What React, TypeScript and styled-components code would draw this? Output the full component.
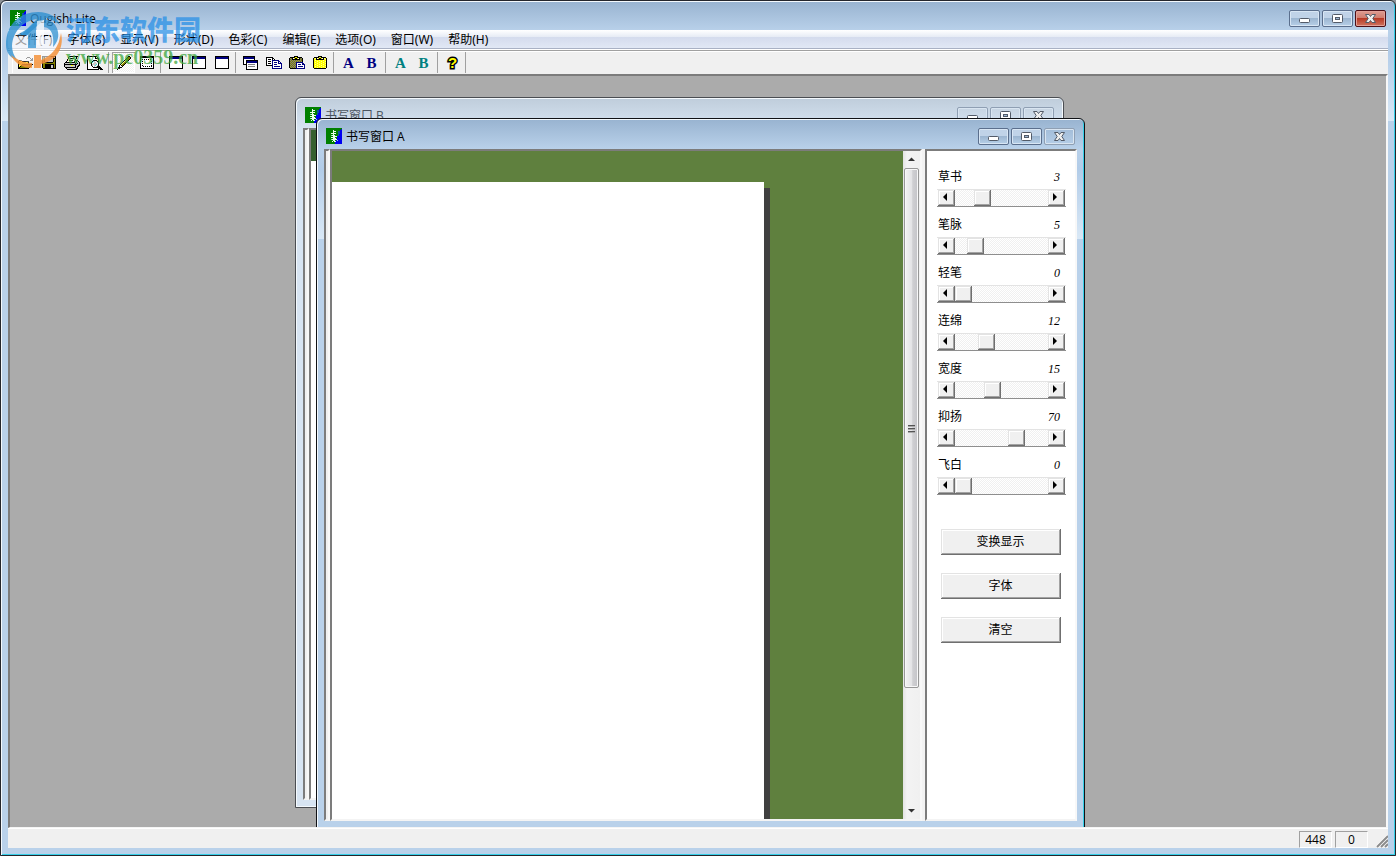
import React from 'react';
import styled, { createGlobalStyle, css } from 'styled-components';

const GlobalStyle = createGlobalStyle`
  * { box-sizing: border-box; }
  body {
    margin: 0;
    background: #8d9297;
    font-family: 'Open Sans', 'Noto Sans CJK SC', sans-serif;
    font-size: 12px;
    line-height: 18px;
    color: #000;
  }
  button, input { font: inherit; color: inherit; margin: 0; }
`;

const sunken = css`
  border: 2px solid;
  border-color: #7c7c7c #f8f8f8 #f4f4f4 #7c7c7c;
`;

const raised = css`
  border: 0;
  background: #f0f0f0;
  box-shadow: inset -1px -1px #6f6f6f, inset 1px 1px #e3e3e3, inset -2px -2px #a3a3a3, inset 2px 2px #fff;
`;

/* ---------- window frames ---------- */

const glass = css`
  background: linear-gradient(#98b3d0 0, #b9d1ea 30px, #b2cce8 50px, #d9e8f6 120px, #b9d1ea 120px);
  box-shadow: inset 1px 1px #f4f9fd, inset -1px -1px #35cfe8;
`;

const paleGlass = css`
  background: linear-gradient(#bfcddb 0, #d7e4f2 30px);
  box-shadow: inset 1px 1px #f4f9fd, inset -1px -1px #f4f9fd;
`;

const AppFrame = styled.div`
  ${glass}
  position: relative;
  display: flex;
  flex-direction: column;
  min-height: 100vh;
  padding: 0 7px 7px;
  border: 1px solid #24262c;
  border-radius: 6px 6px 0 0;
`;

const ChildFrame = styled.section<{ $left: number; $top: number; $height: number; $active?: boolean }>`
  ${p => (p.$active ? glass : paleGlass)}
  position: absolute;
  left: ${p => p.$left}px;
  top: ${p => p.$top}px;
  width: 769px;
  height: ${p => p.$height}px;
  display: flex;
  flex-direction: column;
  padding: 0 7px 7px;
  border: 1px solid ${p => (p.$active ? '#101216' : '#4a4d52')};
  border-radius: 6px 6px 0 0;
`;

const CaptionBar = styled.header<{ $tall?: boolean }>`
  flex: none;
  display: flex;
  align-items: flex-start;
  gap: 4px;
  height: ${p => (p.$tall ? 30 : 29)}px;
  padding: 9px 2px 0;
`;

const CaptionText = styled.h1<{ $dim?: boolean }>`
  flex: 1;
  margin: 0;
  font-size: 12px;
  line-height: 17px;
  font-weight: 400;
  color: ${p => (p.$dim ? '#4b5560' : '#000')};
`;

const CaptionButtons = styled.div`
  display: flex;
  gap: 2px;
`;

const CaptionButton = styled.button<{ $kind: 'normal' | 'close' | 'dim' }>`
  display: grid;
  place-items: center;
  width: 31px;
  height: 17px;
  padding: 0;
  border: 1px solid ${p => ({ normal: '#5b6f8d', close: '#4c0f17', dim: '#8f9fb3' })[p.$kind]};
  border-radius: 2px;
  box-shadow: inset 0 0 0 1px ${p => ({ normal: '#d8e6f4', close: '#e3a097', dim: '#d9e5f1' })[p.$kind]};
  background: ${p =>
    ({
      normal: 'linear-gradient(#c0d3e8 0 50%, #9cb6d1 50%, #b7d0e8)',
      close: 'linear-gradient(#dd9c92 0, #cf7a6c 50%, #b83a26 50%, #cf7460)',
      dim: 'transparent',
    })[p.$kind]};
`;

type GlyphKind = 'min' | 'max' | 'close';

function CaptionGlyph({ kind }: { kind: GlyphKind }) {
  if (kind === 'min')
    return (
      <svg width="13" height="11" viewBox="0 0 13 11">
        <rect x="1.5" y="5.5" width="10" height="4" rx="1" fill="#fff" stroke="#535b68" />
      </svg>
    );
  if (kind === 'max')
    return (
      <svg width="13" height="11" viewBox="0 0 13 11">
        <rect x="1.5" y="1.5" width="10" height="8" rx="1" fill="#fff" stroke="#535b68" />
        <rect x="4.5" y="4.5" width="4" height="2" fill="#9db6d3" stroke="#535b68" />
      </svg>
    );
  return (
    <svg width="13" height="11" viewBox="0 0 13 11">
      <path
        d="M1.5 1.500h3.500l1.500 2 1.500-2h3.500L8.800 5.500l2.700 4H8l-1.500-2-1.500 2H1.500l2.700-4z"
        fill="#eee"
        stroke="#535b68"
        strokeLinejoin="round"
      />
    </svg>
  );
}

function AppIcon() {
  return (
    <svg width="16" height="16" viewBox="0 0 16 16" shapeRendering="crispEdges" aria-hidden="true">
      <path d="M0 0h16v16H0z" fill="#008000" />
      <path d="M16 1v15H9v-3l2-2V8l2-1V4l2-3z" fill="#0000f0" />
      <path d="M12 3h2v3h-1v2h-1z" fill="#0b54a0" />
      <path
        d="M7 2h1v1h2v1H8v1h2v1H8v1h1v1h2v1H9v1h1v1h1v1H9v1h1v1H8v-1H7v1H6v-1h1v-1H6v-1h1v-1H5V9h2V8H6V7h1V6H5V5h2z"
        fill="#eaffef"
      />
      <path d="M5 7h1v1H5zM11 12h1v1h-1zM5 11h1v1H5z" fill="#9fe0c0" />
    </svg>
  );
}

function Caption({ title, close, dim, tall }: { title: string; close: 'close' | 'dim'; dim?: boolean; tall?: boolean }) {
  const kind = dim ? 'dim' : 'normal';
  return (
    <CaptionBar $tall={tall}>
      <AppIcon />
      <CaptionText $dim={dim}>{title}</CaptionText>
      <CaptionButtons>
        <CaptionButton $kind={kind} aria-label="最小化"><CaptionGlyph kind="min" /></CaptionButton>
        <CaptionButton $kind={kind} aria-label="最大化"><CaptionGlyph kind="max" /></CaptionButton>
        <CaptionButton $kind={close} aria-label="关闭"><CaptionGlyph kind="close" /></CaptionButton>
      </CaptionButtons>
    </CaptionBar>
  );
}

/* ---------- menu and toolbar ---------- */

const MenuBar = styled.nav`
  flex: none;
  display: flex;
  gap: 1px;
  height: 20px;
  background: linear-gradient(#fff 0, #e6ebf5 7px, #d4dbed 7px, #e1e8f5 18px, #a9b1c4 18px, #a9b1c4 19px, #fff 19px);
`;

const MenuItem = styled.button`
  padding: 0 7px;
  border: 0;
  background: none;
  font-family: 'Noto Sans', 'Noto Sans CJK SC', sans-serif;
  line-height: 20px;
  white-space: nowrap;
`;

const ToolBar = styled.div`
  flex: none;
  display: flex;
  align-items: center;
  height: 24px;
  padding-left: 4px;
  border-top: 1px solid #a0a0a0;
  box-shadow: inset 0 1px #fff;
  background: #f0f0f0;
`;

const ToolGroup = styled.div`
  display: flex;
  border-right: 1px solid #a0a0a0;
  padding-right: 2px;
  margin-right: 3px;
  &:first-child { border-left: 1px solid #fff; padding-left: 1px; }
  &:last-child { padding-right: 1px; }
`;

const ToolButton = styled.button<{ $pressed?: boolean }>`
  display: grid;
  place-items: center;
  width: 23px;
  height: 21px;
  padding: 0;
  border: 0;
  background: ${p => (p.$pressed ? 'repeating-conic-gradient(#fff 0 25%, #f0f0f0 0 50%) 0 0 / 2px 2px' : 'none')};
  box-shadow: ${p => (p.$pressed ? 'inset 1px 1px #a0a0a0, inset -1px -1px #fff' : 'none')};
`;

const LetterIcon = styled.span<{ $color: string }>`
  font: bold 15px/18px 'Liberation Serif', serif;
  color: ${p => p.$color};
`;

const HelpIcon = styled.span`
  font: bold 15px/18px 'Liberation Sans', sans-serif;
  color: #ffff00;
  -webkit-text-stroke: 3px #000;
  paint-order: stroke fill;
`;

const palette: Record<string, string> = {
  K: '#000', W: '#fff', Y: '#ffff00', P: '#ffff90', O: '#808000', G: '#808080', L: '#c8c8c8', N: '#000080', C: '#40e0e0',
};

const bitmaps: Record<string, string[]> = {
  open: [
    '.........KKK....', '........K...K.K.', '.............KK.', '.KKK........KKK.', 'KPYPKKKKKKK.....', 'KYPYPYPYPYK.....',
    'KPYPYPYPYPK.....', 'KYPYKKKKKKKKKKK.', 'KPYKOOOOOOOOOK..', 'KYKOOOOOOOOOK...', 'KKOOOOOOOOOK....', 'KKKKKKKKKKK.....',
  ],
  save: [
    'KKKKKKKKKKKKKK', 'KOKLLLLLLLLKLK', 'KOKLLLLLLLLKKK', 'KOKLLLLLLLLKOK', 'KOKLLLLLLLLKOK', 'KOKLLLLLLLLKOK', 'KOOKKKKKKKKOOK',
    'KOOOOOOOOOOOOK', 'KOOKKKKKKKKKOK', 'KOOKKKKKKLLKOK', 'KOOKKKKKKLLKOK', 'KOOKKKKKKLLKOK', '.KKKKKKKKKKKKK',
  ],
  print: [
    '.....KKKKKKKKK..', '....KWWWWWWWK...', '....KWKKKKWWK...', '...KWWWWWWWK....', '...KWKKKKWWKKK..', '..KWWWWWWWKLKLK.',
    '.KKKKKKKKKKLKLLK', 'KLLLLLLLLLLKLKLK', 'KKKKKKKKKKKKKLLK', 'KLLLLLLYYLLKLLKK', 'KLLLLLLLLLLKLKK.', '.KKKKKKKKKKKLK..', '..KLLLLLLLLLKK..',
    '...KKKKKKKKKK...',
  ],
  preview: [
    'KKKKKKKKKK......', 'KWWWWWWWKWK.....', 'KWWWWWWWKKKK....', 'KWWWWWWWWWWK....', 'KWWWWWKKKKWK....', 'KWWWWKCLWLKK....',
    'KWWWKCWLLWLK....', 'KWWWKWLLLLWK....', 'KWWWKLLLLCWK....', 'KWWWKLWLCWLK....', 'KWWWWKWLWLKKK...', 'KWWWWWKKKKKKKK..',
    'KWWWWWWWWWWKKKK.', 'KKKKKKKKKKKK.KKK',
  ],
  pen: [
    '............KK..', '...........KOOK.', '..........KOOOK.', '.........KOOOK..', '........KPOOK...', '.......KPOOK....', '......KPOOK.....',
    '.....KPOOK......', '....KPOOK.......', '...KWKOK........', '...KWWK.........', '..KKKK..........', '..KK............', '.K..............',
  ],
  select: [
    'KKKKKKKKKKKKKK', 'KKKKKKKKKKKKKK', 'KWWWWWWWWWWWWK', 'KWKWKWKWKWKWWK', 'KWWWWWWWWWWWWK', 'KWKWWWWWWWWKWK', 'KWWWWWWWWWWWWK',
    'KWKWWWWWWWWKWK', 'KWWWWWWWWWWWWK', 'KWKWWWWWWWWKWK', 'KWWKWKWKWKWKWK', 'KWWWWWWWWWWWWK', 'KKKKKKKKKKKKKK',
  ],
  window: [
    'KKKKKKKKKKKKKK', 'KNNNNNNNNNNNNK', 'KNNNNNNNNNNNNK', 'KWWWWWWWWWWWWK', 'KWWWWWWWWWWWWK', 'KWWWWWWWWWWWWK', 'KWWWWWWWWWWWWK',
    'KWWWWWWWWWWWWK', 'KWWWWWWWWWWWWK', 'KWWWWWWWWWWWWK', 'KWWWWWWWWWWWWK', 'KWWWWWWWWWWWWK', 'KKKKKKKKKKKKKK',
  ],
  cascade: [
    'KKKKKKKKKKKK...', 'KNNNNNNNNNNK...', 'KNNNNNNNNNNK...', 'KWWWWWWWWWWK...', 'KWWKKKKKKKKKKKK', 'KWWKNNNNNNNNNNK', 'KWWKNNNNNNNNNNK',
    'KWWKWWWWWWWWWWK', 'KKKKWGGGGGGGWWK', '...KWWWWWWWWWWK', '...KWGGGGGGGWWK', '...KWWWWWWWWWWK', '...KWWWWWWWWWWK', '...KKKKKKKKKKKK',
  ],
  copy: [
    'KKKKKKK.........', 'KWWWWWKK........', 'KWKKKWKWK.......', 'KWWWWWNNNNNNN...', 'KWKKKWNWWWWWNN..', 'KWWWWWNWNNNWNWN.', 'KWKKKWNWWWWWNNNN',
    'KWWWWWNWNNNWWWWN', 'KKKKKKNWWWWWWWWN', '......NWNNNNNNWN', '......NWWWWWWWWN', '......NNNNNNNNNN',
  ],
  paste: [
    '.....KKKK.......', '.KKKKKYYKKKKK...', 'KGOKWYKKYWKOGK..', 'KOGKKKKKKKKGOK..', 'KGOGOGOGOGOGOK..', 'KOGOGOGOGOGOGK..', 'KGOGOGONNNNNNN..',
    'KOGOGOGNWWWWWNN.', 'KGOGOGONWNNNWNNN', 'KOGOGOGNWWWWWWWN', 'KGOGOGONWNNNNNWN', 'KOGOGOGNWWWWWWWN', '.KKKKKKNNNNNNNNN',
  ],
  clipboard: [
    '.....KKKK.....', '.KKKKKYYKKKKK.', 'KYPKWYKKYWKPYK', 'KYYKKKKKKKKYPK', 'KYPYYYPYYYPYYK', 'KYYYPYYYPYYYPK', 'KYPYYYPYYYPYYK',
    'KYYYPYYYPYYYPK', 'KYPYYYPYYYPYYK', 'KYYYPYYYPYYYPK', 'KYPYYYPYYYPYYK', 'KYYYPYYYPYYYPK', '.KKKKKKKKKKKK.',
  ],
};

function Bitmap({ name }: { name: string }) {
  const rows = bitmaps[name];
  const width = rows[0].length;
  return (
    <svg width={width} height={rows.length} viewBox={`0 0 ${width} ${rows.length}`} shapeRendering="crispEdges" aria-hidden="true">
      {rows.flatMap((row, y) =>
        [...row].map((c, x) => (c === '.' ? null : <rect key={`${x}-${y}`} x={x} y={y} width="1" height="1" fill={palette[c]} />)),
      )}
    </svg>
  );
}

/* ---------- workspace ---------- */

const Workspace = styled.main`
  ${sunken}
  border-bottom-width: 1px;
  position: relative;
  flex: 1;
  min-height: 400px;
  overflow: hidden;
  background: #ababab;
`;

const Client = styled.div`
  flex: 1;
  min-height: 0;
  display: flex;
  background: #f3f3f3;
`;

const Ruler = styled.div`
  ${sunken}
  width: 6px;
  background: #f0f0f0;
`;

const CanvasPane = styled.div`
  ${sunken}
  flex: 1;
  display: flex;
  margin-right: 3px;
  overflow: hidden;
`;

const Canvas = styled.div<{ $ink: string }>`
  flex: 1;
  display: flex;
  padding-top: 31px;
  overflow: hidden;
  background: ${p => p.$ink};
`;

const Paper = styled.div`
  width: 432px;
  background: #fff;
  box-shadow: 6px 6px #404040;
`;

const ScrollColumn = styled.div`
  display: flex;
  flex-direction: column;
  width: 17px;
  padding: 0 1px;
  background: linear-gradient(90deg, #e3e3e3, #f3f3f3 4px, #f0f0f0);
`;

const ScrollArrow = styled.button`
  display: grid;
  place-items: center;
  height: 17px;
  padding: 0;
  border: 0;
  background: none;
  &:last-child { margin-top: auto; }
`;

const ScrollThumb = styled.div`
  display: grid;
  place-items: center;
  height: 520px;
  border: 1px solid #979797;
  border-radius: 2px;
  box-shadow: inset 0 0 0 1px #f8f8f8;
  background: linear-gradient(90deg, #f3f3f3, #e4e4e6 50%, #cfcfd2 60%, #c4c4c8);
`;

const Panel = styled.aside`
  ${sunken}
  width: 152px;
  padding: 17px 9px 0 10px;
  background: #fff;
`;

const Setting = styled.div`
  margin-bottom: 9px;
`;

const SettingHead = styled.div`
  display: flex;
  justify-content: space-between;
  margin-bottom: 3px;
  padding: 0 6px 0 1px;
`;

const SettingValue = styled.output`
  font: italic 12px/18px 'Liberation Serif', serif;
`;

const SliderRow = styled.div`
  display: flex;
  height: 18px;
  padding: 0 1px;
  border-top: 1px solid #e3e3e3;
  border-bottom: 1px solid #8e8e8e;
`;

const StepButton = styled.button`
  ${raised}
  display: grid;
  place-items: center;
  flex: none;
  width: 17px;
  padding: 0 2px 1px 0;
`;

const Range = styled.input`
  flex: 1;
  min-width: 0;
  height: 16px;
  appearance: none;
  background: repeating-conic-gradient(#fff 0 25%, #f0f0f0 0 50%) 0 0 / 2px 2px;
  &::-webkit-slider-thumb {
    ${raised}
    appearance: none;
    width: 17px;
    height: 16px;
    border-radius: 0;
  }
`;

const Actions = styled.div`
  display: flex;
  flex-direction: column;
  align-items: center;
  gap: 18px;
  padding: 25px 2px 0 0;
`;

const ActionButton = styled.button`
  ${raised}
  width: 120px;
  height: 26px;
  padding: 0;
`;

const StatusBar = styled.footer`
  flex: none;
  display: flex;
  align-items: flex-end;
  justify-content: flex-end;
  gap: 3px;
  height: 20px;
  border-top: 1px solid #fff;
  background: #f0f0f0;
`;

const StatusCell = styled.span`
  width: 33px;
  height: 17px;
  border: 1px solid;
  border-color: #a0a0a0 #fff #fff #a0a0a0;
  line-height: 16px;
  text-align: center;
`;

const SizeGrip = styled.svg`
  margin-left: 5px;
`;

const Triangle = ({ dir }: { dir: 'left' | 'right' | 'up' | 'down' }) => {
  const shapes = {
    left: 'M6 0v8L2 4z',
    right: 'M2 0v8l4-4z',
    up: 'M1 6h7L4.500 2.500z',
    down: 'M1 3h7L4.500 6.500z',
  };
  return (
    <svg width="9" height="9" viewBox="0 0 9 9" aria-hidden="true">
      <path d={shapes[dir]} fill={dir === 'up' || dir === 'down' ? '#333' : '#000'} />
    </svg>
  );
};

/* ---------- site mark over the corner ---------- */

const SiteMark = styled.div`
  position: absolute;
  left: 4px;
  top: 8px;
  display: flex;
  pointer-events: none;
`;

const SiteText = styled.div`
  padding: 5px 0 0 1px;
  white-space: nowrap;
`;

const SiteName = styled.div`
  font: 900 27px/30px 'Noto Sans CJK SC', sans-serif;
  color: rgba(36, 142, 230, 0.72);
`;

const SiteUrl = styled.div`
  font: bold 20px/26px 'Liberation Serif', serif;
  color: rgba(62, 166, 62, 0.75);
`;

function SiteLogo() {
  return (
    <svg width="60" height="62" viewBox="0 0 60 62" aria-hidden="true">
      <path d="M3 28h51v9c-4 9-12 15-24 16l-14-1C8 49 4 42 3 34z" fill="#fff" opacity="0.6" />
      <path d="M1 36C1 14 16 3 33 3c11 0 19 5 22 13-5-4-9-6-14-7L22 26h-6L32 10C18 12 8 22 7 37c0 5 2 10 5 14C5 49 1 43 1 36z" fill="#2f90d0" opacity="0.8" />
      <path d="M24 19l7-7v27h-8V26H12zM39 10c8 1 13 6 14 13 1 6-1 11-5 15 1-9 0-19-9-20z" fill="#2f90d0" opacity="0.75" />
      <path d="M32 12l7-1v25h-7z" fill="#fff" opacity="0.65" />
      <path d="M56 24c4 17-7 29-20 31v4h-7V46h7v5c10-4 18-12 20-27zM6 46c6 5 14 8 21 8v5C18 59 10 55 6 46z" fill="#f5933c" opacity="0.85" />
    </svg>
  );
}

const menus = ['文件(F)', '字体(S)', '显示(V)', '形状(D)', '色彩(C)', '编辑(E)', '选项(O)', '窗口(W)', '帮助(H)'];

const toolGroups: string[][] = [
  ['open', 'save', 'print', 'preview'],
  ['pen', 'select'],
  ['window', 'window', 'window'],
  ['cascade', 'copy', 'paste', 'clipboard'],
  ['A:#000080', 'B:#000080'],
  ['A:#008080', 'B:#008080'],
  ['?'],
];

const settings = [
  { label: '草书', value: 3, max: 12 },
  { label: '笔脉', value: 5, max: 32 },
  { label: '轻笔', value: 0, max: 10 },
  { label: '连绵', value: 12, max: 40 },
  { label: '宽度', value: 15, max: 40 },
  { label: '抑扬', value: 70, max: 100 },
  { label: '飞白', value: 0, max: 10 },
];

function ToolIcon({ name }: { name: string }) {
  if (name === '?') return <HelpIcon>?</HelpIcon>;
  if (name.includes(':')) {
    const [letter, color] = name.split(':');
    return <LetterIcon $color={color}>{letter}</LetterIcon>;
  }
  return <Bitmap name={name} />;
}

function SettingControl({ label, value: initial, max }: { label: string; value: number; max: number }) {
  const [value, setValue] = React.useState(initial);
  const id = React.useId();
  const step = (by: number) => setValue(v => Math.min(max, Math.max(0, v + by)));
  return (
    <Setting>
      <SettingHead>
        <label htmlFor={id}>{label}</label>
        <SettingValue htmlFor={id}>{value}</SettingValue>
      </SettingHead>
      <SliderRow>
        <StepButton aria-label={`${label} -`} onClick={() => step(-1)}><Triangle dir="left" /></StepButton>
        <Range id={id} type="range" min={0} max={max} value={value} onChange={e => setValue(Number(e.target.value))} />
        <StepButton aria-label={`${label} +`} onClick={() => step(1)}><Triangle dir="right" /></StepButton>
      </SliderRow>
    </Setting>
  );
}

export default function App() {
  return (
    <>
      <GlobalStyle />
      <AppFrame>
        <Caption title="Ougishi Lite" close="close" />
        <MenuBar>
          {menus.map(m => <MenuItem key={m}>{m}</MenuItem>)}
        </MenuBar>
        <ToolBar role="toolbar">
          {toolGroups.map((group, g) => (
            <ToolGroup key={g}>
              {group.map((name, i) => (
                <ToolButton key={i} $pressed={name === 'pen'} aria-label={name}><ToolIcon name={name} /></ToolButton>
              ))}
            </ToolGroup>
          ))}
        </ToolBar>
        <Workspace>
          <ChildFrame $left={285} $top={21} $height={711}>
            <Caption title="书写窗口 B" close="dim" dim tall />
            <Client>
              <Ruler />
              <CanvasPane><Canvas $ink="#35602f"><Paper /></Canvas></CanvasPane>
            </Client>
          </ChildFrame>
          <ChildFrame $left={306} $top={42} $height={711} $active>
            <Caption title="书写窗口 A" close="dim" tall />
            <Client>
              <Ruler />
              <CanvasPane>
                <Canvas $ink="#5f803e"><Paper /></Canvas>
                <ScrollColumn>
                  <ScrollArrow aria-label="向上"><Triangle dir="up" /></ScrollArrow>
                  <ScrollThumb>
                    <svg width="7" height="9" viewBox="0 0 7 9" shapeRendering="crispEdges" aria-hidden="true">
                      <path d="M0 1h7M0 4h7M0 7h7" stroke="#555" />
                      <path d="M0 2h7M0 5h7M0 8h7" stroke="#aaa" />
                    </svg>
                  </ScrollThumb>
                  <ScrollArrow aria-label="向下"><Triangle dir="down" /></ScrollArrow>
                </ScrollColumn>
              </CanvasPane>
              <Panel>
                {settings.map(s => <SettingControl key={s.label} {...s} />)}
                <Actions>
                  <ActionButton>变换显示</ActionButton>
                  <ActionButton>字体</ActionButton>
                  <ActionButton>清空</ActionButton>
                </Actions>
              </Panel>
            </Client>
          </ChildFrame>
        </Workspace>
        <StatusBar>
          <StatusCell>448</StatusCell>
          <StatusCell>0</StatusCell>
          <SizeGrip width="12" height="13" viewBox="0 0 12 13" aria-hidden="true">
            <path d="M1 12L12 1M5 12l7-7M9 12l3-3" stroke="#fff" strokeWidth="3" />
            <path d="M1 12L12 1M5 12l7-7M9 12l3-3" stroke="#8c8c8c" strokeWidth="2" />
          </SizeGrip>
        </StatusBar>
        <SiteMark>
          <SiteLogo />
          <SiteText>
            <SiteName>河东软件园</SiteName>
            <SiteUrl>www.pc0359.cn</SiteUrl>
          </SiteText>
        </SiteMark>
      </AppFrame>
    </>
  );
}
